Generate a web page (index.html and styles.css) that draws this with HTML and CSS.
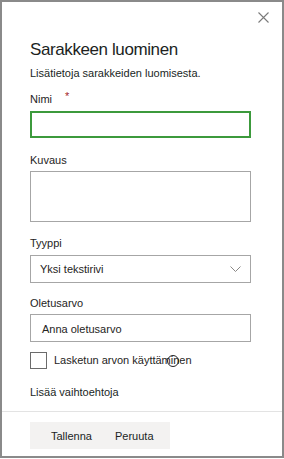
FILE: index.html
```html
<!DOCTYPE html>
<html lang="fi">
<head>
    <meta charset="UTF-8">
    <meta name="viewport" content="width=device-width, initial-scale=1.0">
    <title>Sarakkeen luominen</title>
    <link rel="stylesheet" href="styles.css">
</head>
<body>
    <div class="panel">
        <div class="close-row">
            <button class="close" aria-label="Sulje">
                <svg width="11" height="11" viewBox="0 0 11 11">
                    <path d="M0.5 0.5 L10.5 10.5 M10.5 0.5 L0.5 10.5" stroke="#7a7a7a" stroke-width="1.1" fill="none"/>
                </svg>
            </button>
        </div>
        <div class="content">
            <h1 class="title">Sarakkeen luominen</h1>
            <a class="info" href="#">Lisätietoja sarakkeiden luomisesta.</a>

            <label class="label label-name">Nimi <span class="req">*</span></label>
            <div class="input input-focus"></div>

            <label class="label label-desc">Kuvaus</label>
            <div class="input textarea"></div>

            <label class="label label-type">Tyyppi</label>
            <div class="input dropdown">
                <span>Yksi tekstirivi</span>
                <svg width="11" height="6" viewBox="0 0 11 6">
                    <path d="M0.5 0.5 L5.5 5.5 L10.5 0.5" stroke="#8a8886" stroke-width="1" fill="none"/>
                </svg>
            </div>

            <label class="label label-default">Oletusarvo</label>
            <div class="input default-value">Anna oletusarvo</div>

            <div class="check-row">
                <span class="checkbox"></span>
                <span class="check-label">Lasketun arvon käyttäminen
                    <span class="cursor"></span>
                </span>
            </div>

            <a class="more" href="#">Lisää vaihtoehtoja</a>
        </div>
        <div class="divider"></div>
        <div class="footer">
            <div class="actions">
                <button class="btn">Tallenna</button>
                <button class="btn">Peruuta</button>
            </div>
        </div>
    </div>
</body>
</html>
```
FILE: styles.css
```css
body {
    margin: 0;
    font-family: 'Liberation Sans', Arial, sans-serif;
    color: #252423;
    background: #fff;
}

.panel {
    width: 284px;
    height: 458px;
    box-sizing: border-box;
    border: 2px solid #8a8a8a;
    display: flex;
    flex-direction: column;
}

.close-row {
    height: 26px;
    display: flex;
    justify-content: flex-end;
    padding-right: 13px;
}

.close {
    border: none;
    background: none;
    padding: 0;
    margin-top: 10px;
    width: 11px;
    height: 11px;
    display: flex;
    cursor: pointer;
}

.content {
    padding: 0 31px 0 28px;
    display: flex;
    flex-direction: column;
    align-items: flex-start;
}

.title {
    margin: 8px 0 0;
    font-size: 17px;
    font-weight: normal;
    letter-spacing: -0.4px;
    line-height: 28px;
    color: #201f1e;
}

.info,
.more {
    font-size: 11px;
    line-height: 18px;
    color: #201f1e;
    text-decoration: none;
}

.label {
    font-size: 11px;
    line-height: 18px;
    height: 18px;
    color: #252423;
}

.label-name { margin-top: 8px; }
.label-desc { margin-top: 13px; }
.label-type { margin-top: 12px; }
.label-default { margin-top: 11px; }

.req {
    position: relative;
    top: -3px;
    margin-left: 10px;
    color: #a4262c;
}

.input {
    align-self: stretch;
    box-sizing: border-box;
    border: 1px solid #a6a6a6;
    height: 28px;
    font-size: 11px;
    color: #252423;
}

.input-focus {
    margin-top: 3px;
    height: 27px;
    border: 2px solid #3c9a3c;
}

.textarea {
    margin-top: 2px;
    height: 51px;
}

.dropdown {
    margin-top: 3px;
    display: flex;
    align-items: center;
    justify-content: space-between;
    padding: 0 9px 0 9px;
    line-height: 26px;
}

.dropdown svg {
    margin-top: -1px;
}

.default-value {
    margin-top: 2px;
    padding: 2px 11px 0;
    line-height: 24px;
}

.check-row {
    margin-top: 10px;
    display: flex;
    align-items: center;
    gap: 7px;
    height: 17px;
}

.checkbox {
    width: 17px;
    height: 17px;
    box-sizing: border-box;
    border: 1px solid #6b6b6b;
}

.check-label {
    position: relative;
    font-size: 11px;
    line-height: 17px;
    color: #252423;
}

/* mouse pointer caught in the screenshot */
.cursor {
    position: absolute;
    left: 113px;
    top: 3px;
    width: 12px;
    height: 12px;
    box-sizing: border-box;
    border: 1px solid #222;
    border-radius: 50%;
}

.more {
    margin-top: 14px;
}

.divider {
    margin-top: 10px;
    height: 1px;
    background: #e3e3e3;
}

.footer {
    padding: 10px 0 0 28px;
}

.actions {
    display: flex;
    width: 140px;
    height: 27px;
    box-sizing: border-box;
    background: #f3f2f1;
    padding-left: 21px;
    gap: 23px;
}

.btn {
    border: none;
    background: none;
    padding: 2px 0 0;
    font-family: inherit;
    font-size: 11px;
    line-height: 25px;
    color: #201f1e;
    cursor: pointer;
}
```
